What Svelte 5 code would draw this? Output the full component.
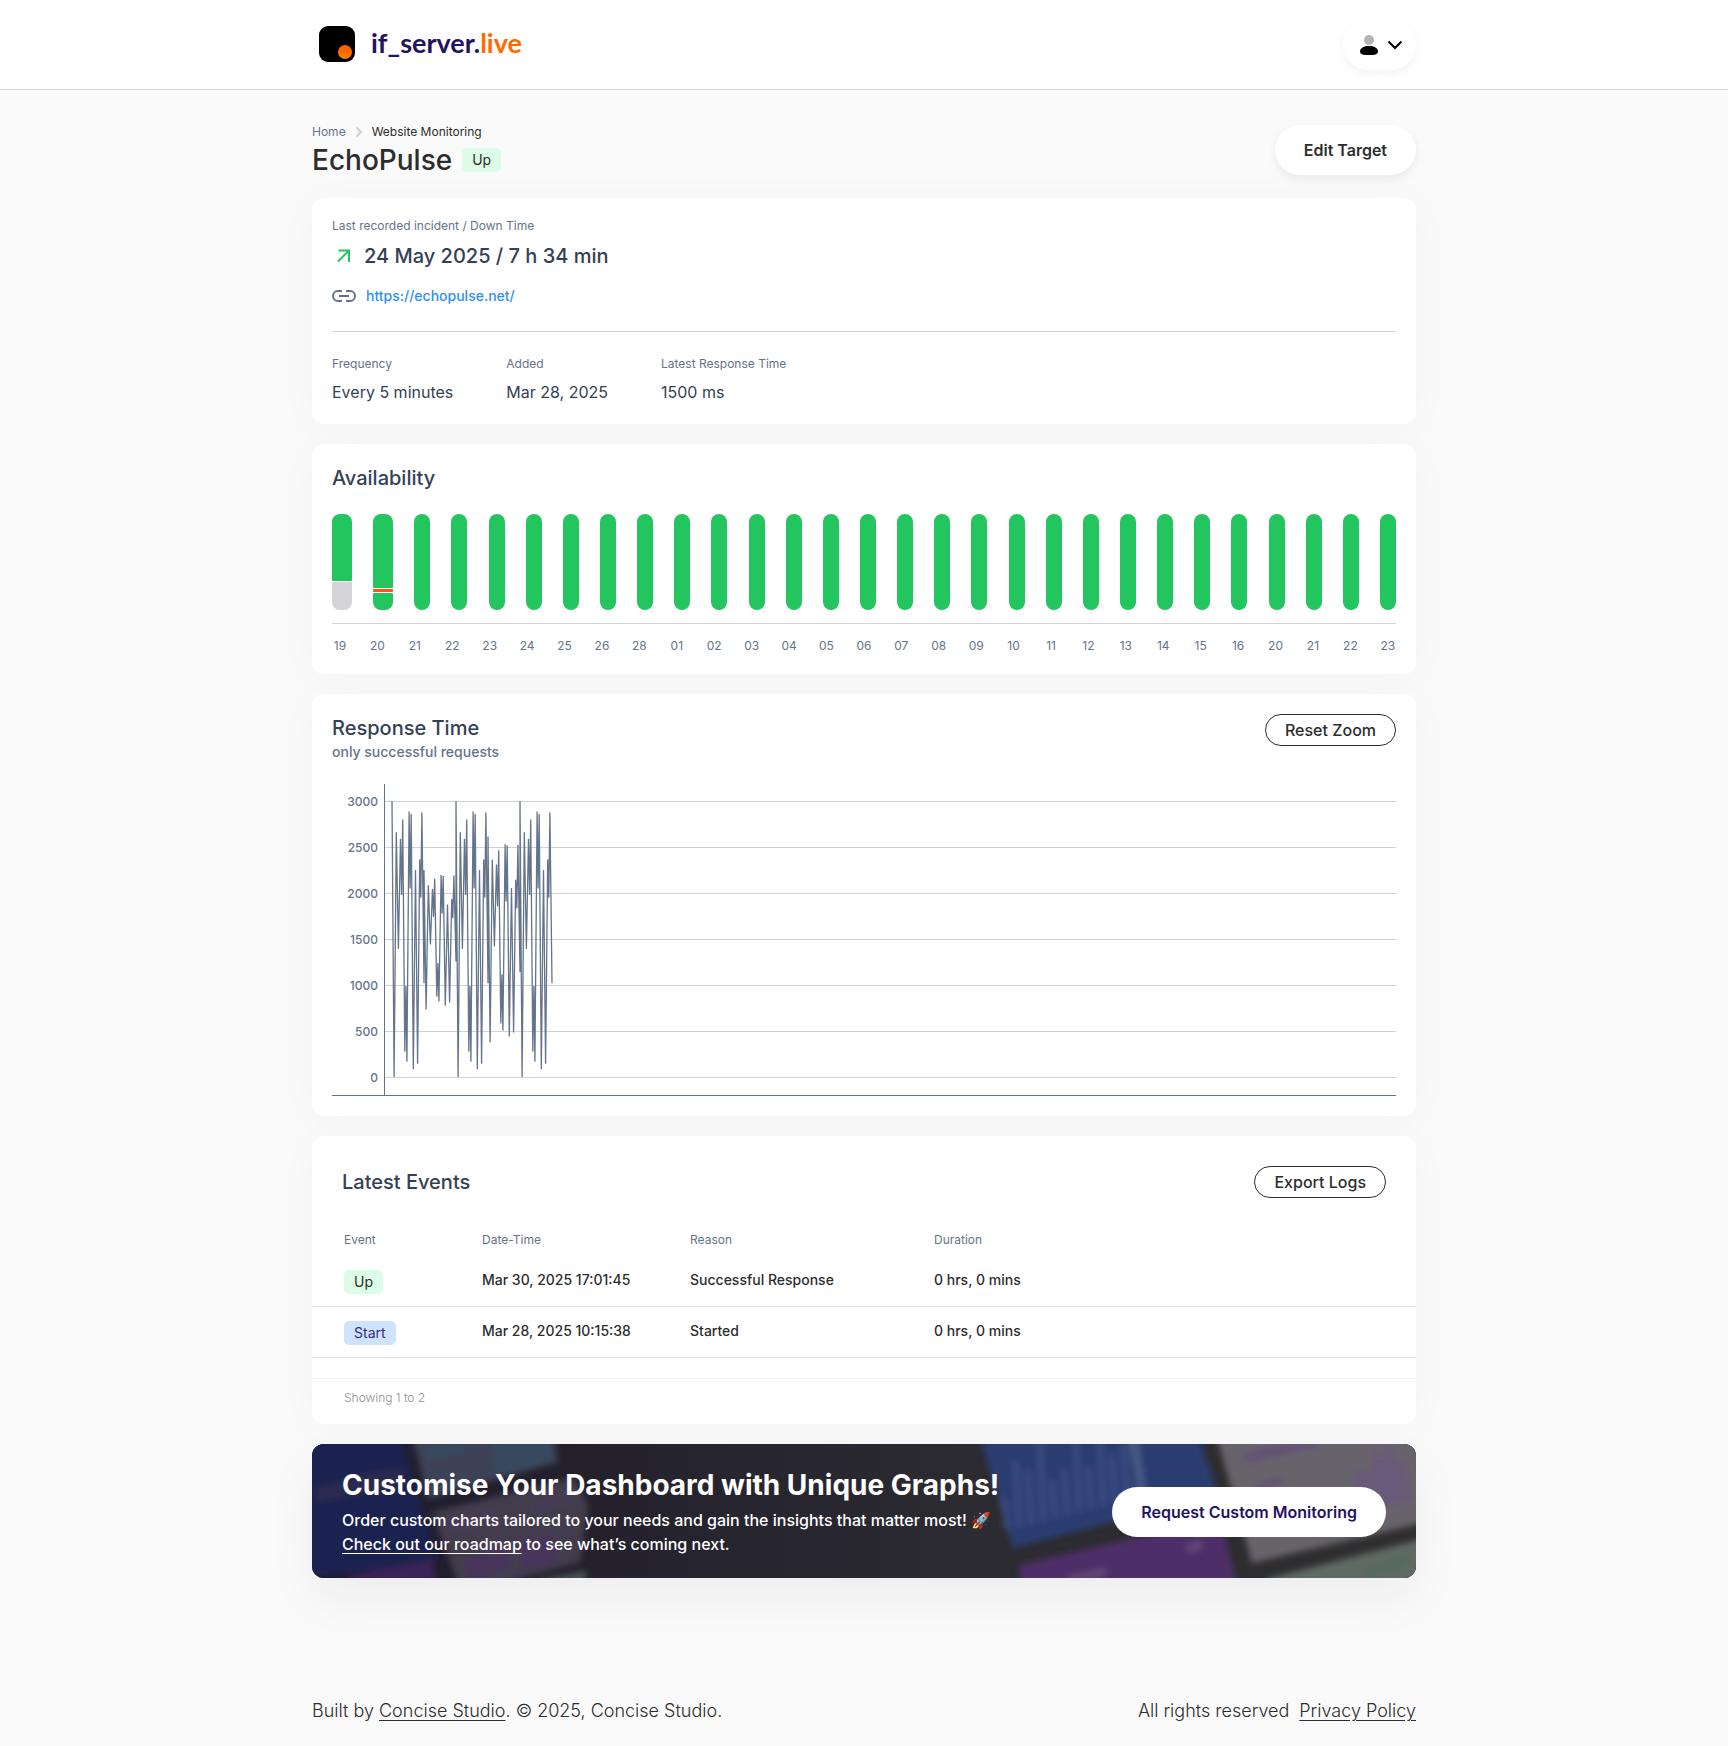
<script>
	const DETAILS = [
		{ label: 'Frequency', value: 'Every 5 minutes' },
		{ label: 'Added', value: 'Mar 28, 2025' },
		{ label: 'Latest Response Time', value: '1500 ms' }
	];

	const DAYS = [
		'19', '20', '21', '22', '23', '24', '25', '26', '28', '01', '02', '03', '04', '05', '06',
		'07', '08', '09', '10', '11', '12', '13', '14', '15', '16', '20', '21', '22', '23'
	];

	// Days that were not fully up, as segments from top to bottom
	const PARTIAL_DAYS = {
		0: [{ status: 'up', share: 67 }, { status: 'unknown', share: 28 }],
		1: [{ status: 'up', share: 74 }, { status: 'down', share: 3 }, { status: 'up', share: 17 }]
	};

	const EVENTS = [
		{ event: 'Up', time: 'Mar 30, 2025 17:01:45', reason: 'Successful Response', duration: '0 hrs, 0 mins' },
		{ event: 'Start', time: 'Mar 28, 2025 10:15:38', reason: 'Started', duration: '0 hrs, 0 mins' }
	];

	// --- Response time chart ---
	const TICKS = [3000, 2500, 2000, 1500, 1000, 500, 0];
	const STEP = 32 / 15;
	const BASE_RUN = [3000, 0, 2660, 1390, 2590, 2800, 275, 165, 2885, 2860, 85, 2250, 145, 2365, 2875, 1020];

	// Each run starts at the x where the previous one ended
	const RUNS = [
		BASE_RUN,
		[2250, 735, 2085, 1440, 2045, 2155, 875, 820, 2195, 2185, 775, 1875, 810, 1935, 2190, 1255],
		BASE_RUN,
		[2615, 375, 2365, 1420, 2310, 2465, 580, 505, 2530, 2515, 440, 2055, 485, 2145, 2525, 1140],
		BASE_RUN
	];

	const chartY = (ms) => 293 - ms * 0.092;
	const point = (x, ms) => `${x.toFixed(1)},${chartY(ms).toFixed(1)}`;

	const points = RUNS.flatMap((run, r) =>
		run.flatMap((ms, i) => {
			const x = 60 + (r * 15 + i) * STEP;
			const next = run[i + 1];
			// Neighbours at a similar level swing back towards the middle in between
			if (next !== undefined && Math.abs(next - ms) < 600) {
				const swing = (ms + next) * 0.2 + 900;
				return [point(x, ms), point(x + STEP / 2, swing)];
			}
			return [point(x, ms)];
		})
	).join(' ');

	// Bars in the blurred banner artwork
	const ART_BARS = [28, 62, 50, 76, 34, 42, 66, 38, 60, 44, 50, 36];
</script>

<header class="topbar">
	<div class="container topbar-inner">
		<a class="logo" href="/">
			<svg width="36" height="36" viewBox="0 0 36 36" aria-hidden="true">
				<defs>
					<linearGradient id="dot" x1="0" y1="0" x2="0" y2="1">
						<stop offset="0" stop-color="#ff5500" />
						<stop offset="1" stop-color="#ff7f00" />
					</linearGradient>
				</defs>
				<rect width="36" height="36" rx="9" />
				<circle cx="26" cy="26" r="7" fill="url(#dot)" />
			</svg>
			<span>if_server.<em>live</em></span>
		</a>
		<button type="button" class="user" aria-label="Account menu">
			<svg width="18" height="20" viewBox="0 0 18 20" aria-hidden="true">
				<circle cx="9" cy="5" r="5" fill="#b3b3b3" />
				<path d="M0 16.500C0 13 4 11 9 11s9 2 9 5.500C18 18.500 16 20 12.500 20h-7C2 20 0 18.500 0 16.500z" />
			</svg>
			<svg width="16" height="10" viewBox="0 0 16 10" fill="none" stroke="#000" stroke-width="2" aria-hidden="true">
				<path d="M1.500 1.500 8 8l6.500-6.500" />
			</svg>
		</button>
	</div>
</header>

<main class="container">
	<div class="page-head">
		<div>
			<nav class="crumbs" aria-label="Breadcrumb">
				<a href="/">Home</a>
				<svg width="8" height="10" viewBox="0 0 8 10" fill="none" stroke="#d0d0d4" stroke-width="2" aria-hidden="true">
					<path d="m1.500.5 4.500 4.500-4.500 4.500" />
				</svg>
				<span>Website Monitoring</span>
			</nav>
			<div class="title-row">
				<h1>EchoPulse</h1>
				<span class="badge up">Up</span>
			</div>
		</div>
		<button type="button" class="pill">Edit Target</button>
	</div>

	<section class="card">
		<div class="label">Last recorded incident / Down Time</div>
		<div class="incident">
			<svg width="24" height="24" viewBox="0 0 24 24" fill="none" stroke="#22c55e" stroke-width="2" aria-hidden="true">
				<path d="M6 17.500 17 6.500M6.500 6.500H17V18" />
			</svg>
			<h2>24 May 2025 / 7 h 34 min</h2>
		</div>
		<div class="target-url">
			<svg width="24" height="12" viewBox="0 0 24 12" fill="none" stroke="#64748b" stroke-width="2" aria-hidden="true">
				<path d="M10 1H6a5 5 0 0 0 0 10h4M14 1h4a5 5 0 0 1 0 10h-4M7 6h10" />
			</svg>
			<a href="https://echopulse.net/">https://echopulse.net/</a>
		</div>
		<hr />
		<dl class="details">
			{#each DETAILS as d}
				<div>
					<dt class="label">{d.label}</dt>
					<dd>{d.value}</dd>
				</div>
			{/each}
		</dl>
	</section>

	<section class="card">
		<h2>Availability</h2>
		<div class="bars">
			{#each DAYS as day, i}
				<div class="bar" class:wide={PARTIAL_DAYS[i]}>
					{#each PARTIAL_DAYS[i] ?? [{ status: 'up', share: 96 }] as seg}
						<div class="segment {seg.status}" style="flex-grow: {seg.share}"></div>
					{/each}
				</div>
			{/each}
		</div>
		<hr class="axis" />
		<div class="days">
			{#each DAYS as day}
				<span>{day}</span>
			{/each}
		</div>
	</section>

	<section class="card">
		<div class="card-head">
			<div>
				<h2>Response Time</h2>
				<p class="subtitle">only successful requests</p>
			</div>
			<button type="button" class="outline">Reset Zoom</button>
		</div>
		<svg class="chart" viewBox="0 0 1064 312" role="img" aria-label="Response time in milliseconds">
			{#each TICKS as tick}
				<line class="grid" x1="53" x2="1064" y1={chartY(tick) + 0.5} y2={chartY(tick) + 0.5} />
				<text x="46" y={chartY(tick) + 5} text-anchor="end">{tick}</text>
			{/each}
			<polyline class="series" {points} />
			<path class="axes" d="M52.500 0V311M0 311.500H1064" />
		</svg>
	</section>

	<section class="card events">
		<div class="card-head">
			<h2>Latest Events</h2>
			<button type="button" class="outline">Export Logs</button>
		</div>
		<table>
			<thead>
				<tr>
					<th class="col-event">Event</th>
					<th class="col-time">Date-Time</th>
					<th class="col-reason">Reason</th>
					<th>Duration</th>
				</tr>
			</thead>
			<tbody>
				{#each EVENTS as e}
					<tr>
						<td><span class="badge {e.event.toLowerCase()}">{e.event}</span></td>
						<td>{e.time}</td>
						<td>{e.reason}</td>
						<td>{e.duration}</td>
					</tr>
				{/each}
			</tbody>
		</table>
		<div class="showing">Showing 1 to 2</div>
	</section>

	<section class="banner">
		<svg class="art" viewBox="0 0 1104 134" preserveAspectRatio="xMidYMid slice" aria-hidden="true">
			<defs>
				<linearGradient id="base" x1="0" x2="1" y1="0" y2="0">
					<stop offset="0" stop-color="#1e1c30" />
					<stop offset="0.25" stop-color="#24212c" />
					<stop offset="0.6" stop-color="#2b2b31" />
					<stop offset="1" stop-color="#2f2f2f" />
				</linearGradient>
				<filter id="soft" x="-5%" y="-20%" width="110%" height="140%">
					<feGaussianBlur stdDeviation="3" />
				</filter>
			</defs>
			<rect width="1104" height="134" fill="url(#base)" />
			<g filter="url(#soft)">
				<path d="M-10-10H88L125 118-10 136z" fill="#1c2450" />
				<path d="M4 44 60 28l30-4 4 16-60 14-30 4z" fill="#292b50" />
				<path d="M38 150V132l82-16 6 34z" fill="#3a2059" />
				<path d="M100-10H241l5 28L116 55z" fill="#3e4356" />
				<path d="M112 6l40-10v12l-36 8zM182-10h56l4 28-58 14z" fill="#37495f" />
				<path d="M120 68 262 34 276 62 268 118 150 150z" fill="#433e4d" />
				<path d="M134 76l48-11v10l-46 12zM222 60l38-12v9l-38 10z" fill="#473a59" />
				<path d="M150 118l46-18 4 24-42 14zM208 98l34-8 4 28-36 8z" fill="#47345c" />
				<path d="M226 136l48-9v16h-50z" fill="#4b5254" />
				<path d="M667-10H886L906 50 701 104z" fill="#2a3e71" />
				{#each ART_BARS as h, i}
					<path d="M{689 + i * 12} {82 - i * 3 - h}h5l4 {h + 4}h-5z" fill="#3c5083" />
				{/each}
				<path d="M815-10h10l10 66h-6z" fill="#465b86" />
				<path d="M707 121 908 74l18 70H709z" fill="#4d2e68" />
				<path d="M874 101l16-5v9l-14 4zM756 132l38-8v7l-36 9z" fill="#634878" />
				<path d="M904-10h210v88L940 119z" fill="#67636a" />
				<path d="M930 10 962 1 1006-6v8L970 12 932 20zM942 40l24-8 6 8-26 8z" fill="#655276" />
				<path d="M1040 30l12-8 4 10 8-34 6 18 6-20 10 24 8-4 6 40-48 12z" fill="#685a78" />
				<path d="M958 134 1114 94v50H950z" fill="#5f6b64" />
				<path d="M1050 126l46-16v10l-40 14z" fill="#546b5e" />
			</g>
		</svg>
		<div class="banner-text">
			<h3>Customise Your Dashboard with Unique Graphs!</h3>
			<p>
				Order custom charts tailored to your needs and gain the insights that matter most! 🚀<br />
				<a href="/roadmap">Check out our roadmap</a> to see what’s coming next.
			</p>
		</div>
		<button type="button" class="pill brand">Request Custom Monitoring</button>
	</section>
</main>

<footer class="container footer">
	<span>Built by <a href="/studio">Concise Studio</a>. © 2025, Concise Studio.</span>
	<span class="legal">All rights reserved <a href="/privacy">Privacy Policy</a></span>
</footer>

<style>
	:global(body) {
		background: #fafafa;
		font-family: Inter, 'Liberation Sans', sans-serif;
		color: #2d2d2d;
	}

	h1,
	h2,
	h3,
	p,
	dl,
	dd {
		margin: 0;
	}

	h2 {
		font-size: 20px;
		line-height: 28px;
		font-weight: 500;
		color: #334155;
	}

	hr {
		border: 0;
		height: 1px;
		margin: 25px 0 24px;
		background: #d4d4d8;
	}

	button {
		font-family: inherit;
		font-size: 16px;
		cursor: pointer;
	}

	.container {
		box-sizing: border-box;
		max-width: 1152px;
		margin: 0 auto;
		padding: 0 24px;
	}

	.topbar {
		background: white;
		border-bottom: 1px solid #d1d1d4;
	}

	.topbar-inner {
		display: flex;
		justify-content: space-between;
		align-items: flex-start;
		padding-top: 20px;
		padding-bottom: 19px;
	}

	.logo {
		display: flex;
		align-items: center;
		gap: 16px;
		height: 48px;
		padding-left: 7px;
		font-family: Lato, sans-serif;
		font-size: 27px;
		font-weight: 700;
		line-height: 32px;
		color: #23125f;
		text-decoration: none;
	}

	.logo span {
		padding-bottom: 2px;
	}

	.logo em {
		font-style: normal;
		color: #ff6a00;
	}

	.user {
		display: flex;
		align-items: center;
		gap: 9px;
		height: 50px;
		padding: 0 13px 0 17px;
		border: 0;
		border-radius: 25px;
		background: white;
		box-shadow: 0 4px 10px rgba(0, 0, 0, 0.05);
	}

	.page-head {
		display: flex;
		justify-content: space-between;
		align-items: flex-start;
		padding: 35px 0 17px;
	}

	.crumbs {
		display: flex;
		align-items: center;
		gap: 9px;
		font-size: 12px;
		line-height: 14px;
	}

	.crumbs a {
		color: #64748b;
		text-decoration: none;
	}

	.title-row {
		display: flex;
		align-items: center;
		gap: 10px;
	}

	h1 {
		font-size: 28px;
		line-height: 42px;
		font-weight: 500;
	}

	.badge {
		display: block;
		width: fit-content;
		padding: 0 10px;
		border-radius: 5px;
		font-size: 14px;
		line-height: 24px;
		font-weight: 400;
	}

	.badge.up {
		background: #dcfce7;
	}

	.badge.start {
		background: #cfe2ff;
		color: #312e81;
	}

	.pill {
		height: 50px;
		padding: 0 29px;
		border: 0;
		border-radius: 25px;
		background: white;
		color: #2d2d2d;
		font-weight: 600;
		box-shadow: 0 4px 10px rgba(0, 0, 0, 0.07);
	}

	.pill.brand {
		flex-shrink: 0;
		color: #23125f;
		box-shadow: none;
	}

	.outline {
		height: 32px;
		padding: 0 19px;
		border: 1px solid #2d2d2d;
		border-radius: 16px;
		background: white;
		color: #2d2d2d;
		font-weight: 500;
	}

	.card {
		margin-bottom: 20px;
		padding: 20px;
		border-radius: 12px;
		background: white;
		box-shadow: 0 4px 40px rgba(0, 0, 0, 0.03);
	}

	.label {
		font-size: 12px;
		line-height: 16px;
		color: #64748b;
	}

	.incident {
		display: flex;
		align-items: center;
		gap: 8px;
		margin-top: 8px;
	}

	.target-url {
		display: flex;
		align-items: center;
		gap: 10px;
		margin-top: 16px;
		font-size: 14px;
		line-height: 20px;
		font-weight: 500;
	}

	.target-url a {
		color: #2e90fa;
		text-decoration: none;
	}

	.details {
		display: flex;
		flex-wrap: wrap;
		gap: 53px;
	}

	.details dd {
		margin-top: 8px;
		font-size: 16px;
		line-height: 24px;
		color: #334155;
	}

	.bars {
		display: flex;
		justify-content: space-between;
		height: 96px;
		margin-top: 22px;
	}

	.bar {
		display: flex;
		flex-direction: column;
		gap: 1px;
		width: 16px;
		border-radius: 8px;
		overflow: hidden;
	}

	.bar.wide {
		width: 20px;
	}

	.segment {
		flex-basis: 0;
		border-radius: 1px;
	}

	.segment.up {
		background: #22c55e;
	}

	.segment.down {
		background: #ff5318;
	}

	.segment.unknown {
		background: #d4d4d8;
	}

	.axis {
		margin: 13px 0;
	}

	.days {
		display: flex;
		justify-content: space-between;
		font-size: 12px;
		line-height: 17px;
		color: #64748b;
	}

	.days span {
		display: flex;
		justify-content: center;
		width: 16px;
	}

	.card-head {
		display: flex;
		justify-content: space-between;
		align-items: flex-start;
	}

	.subtitle {
		font-size: 14px;
		line-height: 20px;
		font-weight: 500;
		color: #64748b;
	}

	.chart {
		display: block;
		width: 100%;
		margin-top: 22px;
	}

	.chart text {
		font-size: 12px;
		font-weight: 500;
		fill: #64748b;
	}

	.grid {
		stroke: #d1d1d4;
	}

	.series {
		fill: none;
		stroke: #64748b;
		stroke-width: 1.3;
		stroke-linejoin: bevel;
	}

	.axes {
		fill: none;
		stroke: #64748b;
	}

	.events {
		padding: 30px 0 0;
	}

	.events .card-head {
		align-items: center;
		padding: 0 30px;
	}

	table {
		width: 100%;
		margin-top: 26px;
		border-collapse: separate;
		border-spacing: 0;
		table-layout: fixed;
	}

	th {
		padding: 8px 0;
		font-size: 12px;
		line-height: 16px;
		font-weight: 400;
		text-align: left;
		color: #64748b;
	}

	td {
		padding: 14px 0 12px;
		border-bottom: 1px solid #e0e0e3;
		font-size: 14px;
		line-height: 20px;
		font-weight: 500;
		vertical-align: top;
	}

	th:first-child,
	td:first-child {
		padding-left: 32px;
	}

	.col-event {
		width: 138px;
	}

	.col-time {
		width: 208px;
	}

	.col-reason {
		width: 244px;
	}

	.showing {
		margin-top: 20px;
		padding: 10px 32px 17px;
		border-top: 1px solid #f5f5f5;
		border-radius: 0 0 12px 12px;
		background: #fefefe;
		font-size: 12px;
		line-height: 18px;
		font-weight: 300;
		color: #8f8f96;
	}

	.banner {
		position: relative;
		display: flex;
		justify-content: space-between;
		align-items: center;
		gap: 30px;
		padding: 24px 30px 22px;
		border-radius: 12px;
		overflow: hidden;
		color: white;
		background: #24212c;
		box-shadow: 0 20px 50px rgba(30, 30, 60, 0.06);
	}

	.art {
		position: absolute;
		inset: 0;
		width: 100%;
		height: 100%;
	}

	.banner-text,
	.banner .pill {
		position: relative;
	}

	h3 {
		font-size: 28px;
		line-height: 34px;
		font-weight: 700;
	}

	.banner p {
		margin-top: 6px;
		font-size: 16px;
		line-height: 24px;
		font-weight: 500;
	}

	.banner a,
	.footer a {
		color: inherit;
		text-underline-offset: 3px;
	}

	.footer {
		display: flex;
		justify-content: space-between;
		margin-top: 119px;
		padding-bottom: 21px;
		font-size: 18px;
		line-height: 28px;
		font-weight: 300;
	}

	.legal {
		display: flex;
		gap: 10px;
	}
</style>
